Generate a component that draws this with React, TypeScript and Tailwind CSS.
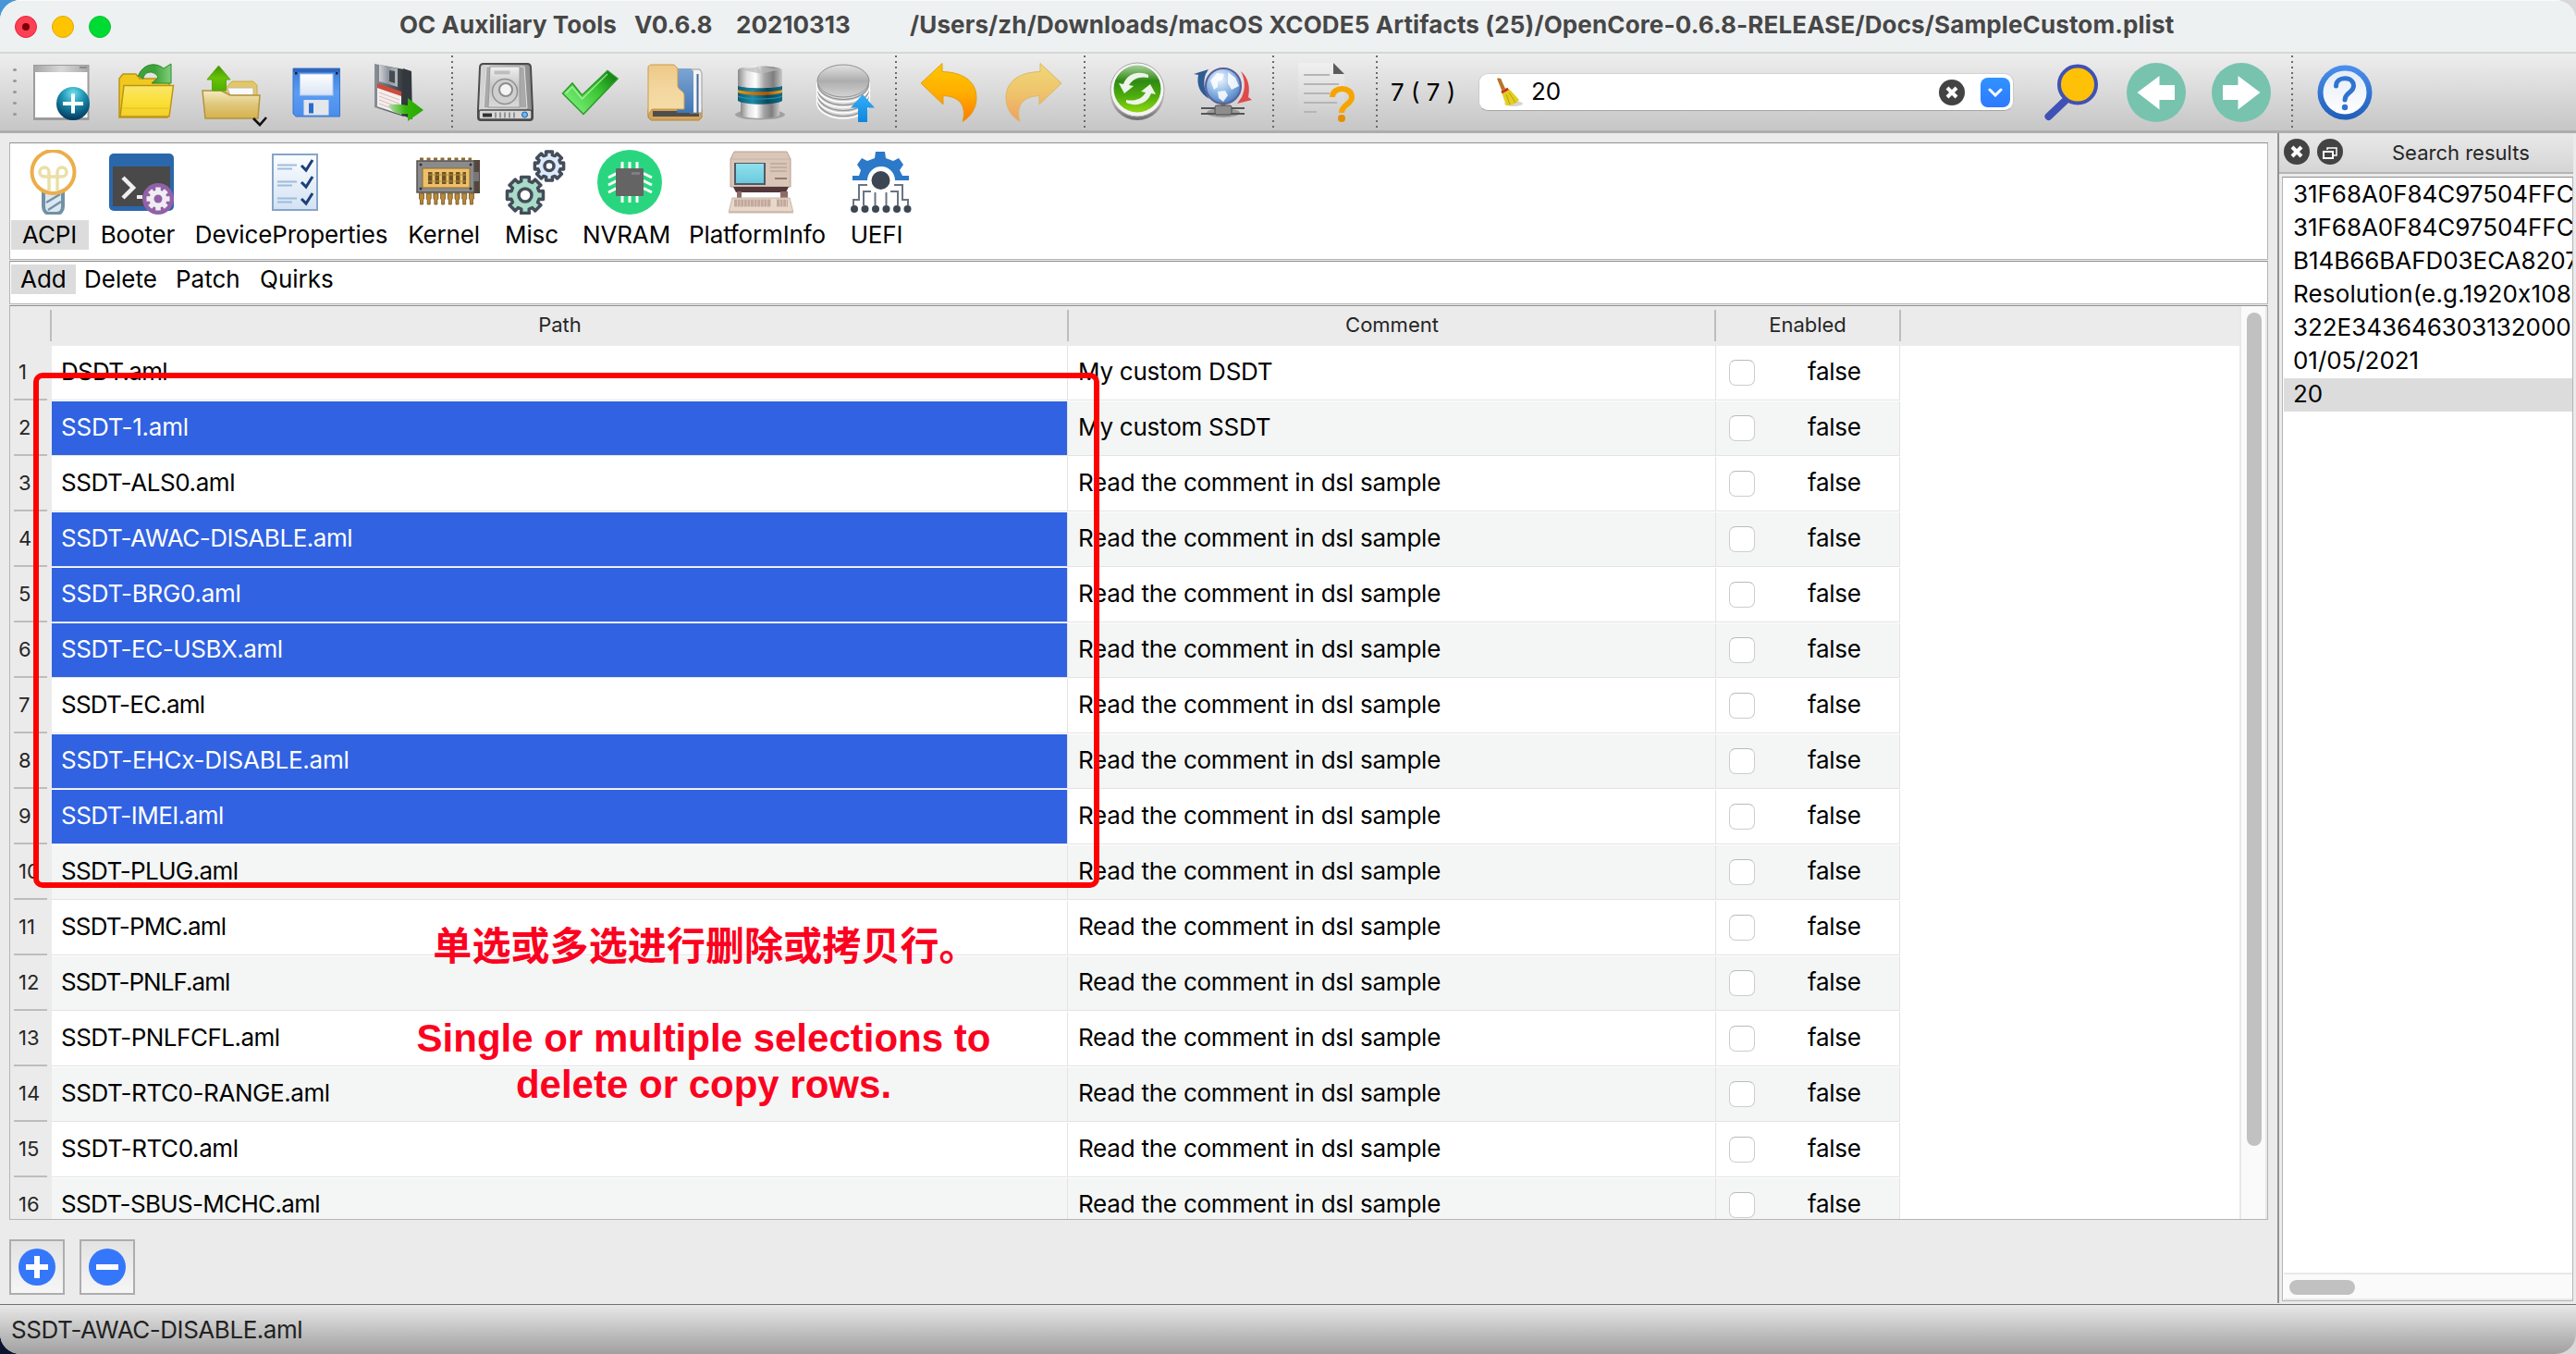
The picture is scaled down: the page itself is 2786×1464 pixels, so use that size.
import React from "react";

const FONT = "font-['Inter','Noto_Sans_CJK_SC',sans-serif]";

function Icon({ children, size = 64 }: { children: React.ReactNode; size?: number }) {
  return (
    <svg viewBox="0 0 64 64" width={size} height={size} className="block shrink-0 overflow-visible">
      {children}
    </svg>
  );
}

function Stops({ id, c, h = false }: { id: string; c: string[]; h?: boolean }) {
  return (
    <linearGradient id={id} x1="0" y1="0" x2={h ? "1" : "0"} y2={h ? "0" : "1"}>
      {c.map((s, i) => (
        <stop key={i} offset={i / (c.length - 1)} stopColor={s} />
      ))}
    </linearGradient>
  );
}

const NewIcon = () => (
  <Icon>
    <defs>
      <Stops id="nw" c={["#a5a5a5", "#d8d8d8", "#a9a9a9"]} h />
      <radialGradient id="nwc" cx=".5" cy=".2" r=".8">
        <stop offset="0" stopColor="#6fe0ee" />
        <stop offset=".45" stopColor="#1b8fae" />
        <stop offset="1" stopColor="#02365c" />
      </radialGradient>
    </defs>
    <rect x="2" y="2" width="60.500" height="60" fill="#9c9c9c" />
    <rect x="3" y="3" width="58.500" height="8" fill="url(#nw)" />
    <rect x="52" y="4" width="8" height="2" fill="#8b8b8b" />
    <rect x="4" y="10" width="56.500" height="49" fill="#fff" />
    <circle cx="45" cy="44" r="18" fill="url(#nwc)" />
    <path d="M45 33.500v21M34 44h22" stroke="#fff" strokeWidth="4" />
  </Icon>
);

const OpenIcon = () => (
  <Icon>
    <defs>
      <Stops id="op" c={["#f8e66a", "#fbe03a", "#f0d02a"]} />
      <Stops id="opa" c={["#3ea13a", "#3ea13a", "#7fd07c"]} h />
    </defs>
    <path d="M3 17 7 12h14l4 5h32v9l-2 33H3z" fill="#f0c91f" stroke="#bd9318" strokeWidth="1.500" />
    <path d="M8 24.500h53.500L57 58H4z" fill="url(#op)" stroke="#bd9318" strokeWidth="1.500" />
    <path d="M6 49h52" stroke="#f2c81c" strokeWidth="1.500" />
    <path d="M23.500 14C28 2 41-2 51 6l8-5v21H38l7-6c-3-8-15-8-16 1z" fill="url(#opa)" stroke="#2b8a2e" />
  </Icon>
);

const FolderUpIcon = () => (
  <Icon>
    <defs>
      <Stops id="fu" c={["#f3ecc0", "#dfc77a", "#d6b14c"]} />
      <Stops id="fua" c={["#3f9400", "#67c208", "#4fae00"]} />
    </defs>
    <path d="M22 31 33 20h23l4 4v12H22z" fill="#e3c766" stroke="#c8aa4e" />
    <path d="M28 27h28v8H31z" fill="#fafafa" stroke="#b9b9b9" />
    <path d="M1 30h20l10 5h32l-2 25H4z" fill="url(#fu)" stroke="#b4923e" strokeWidth="1.500" />
    <path d="M18.500 3 31 18h-4.500v12h-15V18H6z" fill="url(#fua)" stroke="#5da516" />
    <path d="m56 60 7 7 7-8" fill="none" stroke="#111" strokeWidth="2.600" />
  </Icon>
);

const FloppyIcon = () => (
  <Icon>
    <defs>
      <Stops id="fl" c={["#3b7bd8", "#5b9df2", "#4a8ceb"]} />
      <Stops id="fl2" c={["#ffffff", "#d9e4f4"]} />
    </defs>
    <path d="M7 6h50.500v52H10l-3-3z" fill="url(#fl)" stroke="#3b74cf" />
    <rect x="7" y="6" width="50.500" height="4" fill="#2f65bb" />
    <rect x="14.500" y="12" width="35.500" height="23" fill="url(#fl2)" stroke="#a9c6f2" />
    <rect x="9" y="10" width="2.500" height="2.500" fill="#123" />
    <rect x="53" y="10" width="2.500" height="2.500" fill="#123" />
    <rect x="18.500" y="40" width="27" height="16.500" fill="#e3e6ea" />
    <rect x="24" y="43.500" width="5" height="11" fill="#2b6bd0" />
  </Icon>
);

const SaveAsIcon = () => (
  <Icon>
    <defs>
      <Stops id="sa" c={["#8a9097", "#5c636b", "#33373c"]} h />
      <Stops id="sa2" c={["#b5dcae", "#34b60a", "#2aa500"]} h />
      <Stops id="sa3" c={["#d0d3d6", "#8e959c", "#b4b9be"]} h />
    </defs>
    <path d="M34 6l9 3 1 52-10-4z" fill="#33383e" />
    <path d="M3 1 35 7v51L3 48z" fill="url(#sa)" />
    <path d="M8 2l20 4v20L8 20z" fill="url(#sa3)" />
    <path d="M19 8l6 1v13l-6-2z" fill="#454b52" />
    <path d="M6 23l26 9v24L6 47z" fill="#f2efef" />
    <path d="M6 22l26 9v5L6 27z" fill="#cf4a3c" />
    <path d="M8 36l22 8M8 40l22 8M8 32l22 8M8 44l16 6" stroke="#e3b9b4" strokeWidth="1" />
    <path d="M18 46c6-2 12-1 21 0v-8l17 13-17 12v-8c-9 1-16 0-21-9z" fill="url(#sa2)" />
  </Icon>
);

const DriveIcon = () => (
  <Icon>
    <defs>
      <Stops id="dr" c={["#d9d9d9", "#b1b1b1", "#8b8b8b"]} h />
      <Stops id="dr2" c={["#f0f0f0", "#c5c5c5", "#dadada"]} />
    </defs>
    <path d="M9 1h47c3 0 4 2 4 4l2 46v8c0 2-1 3-3 3H6c-2 0-3-1-3-3v-8L5 5c0-2 1-4 4-4z" fill="url(#dr)" stroke="#4c4c4c" strokeWidth="2" />
    <path d="M12 4h41l3 45H9z" fill="#a9a9a9" stroke="#e5e5e5" strokeWidth="1" />
    <path d="M16 4h32v44H14z" fill="url(#dr2)" stroke="#9a9a9a" />
    <rect x="20" y="8" width="18" height="5" rx="1" fill="#bdbdbd" stroke="#e7e7e7" />
    <circle cx="32" cy="31" r="13.500" fill="#cfcfcf" stroke="#909090" strokeWidth="1.500" />
    <circle cx="33" cy="29" r="7" fill="#f4f4f4" stroke="#8c8c8c" strokeWidth="2" />
    <rect x="4" y="51" width="57" height="10" rx="2" fill="#d7d7d7" stroke="#4c4c4c" strokeWidth="1.500" />
    <path d="M8 56.500h10" stroke="#333" strokeWidth="4" />
    <path d="M22 53.500v6M27 53.500v6M32 53.500v6M37 53.500v6M42 53.500v6" stroke="#808080" strokeWidth="1.500" />
    <circle cx="53.500" cy="56" r="3" fill="#6db7f2" stroke="#1d5c9c" />
  </Icon>
);

const CheckIcon = () => (
  <Icon>
    <defs>
      <linearGradient id="ck" x1="0" y1=".7" x2="1" y2="0">
        <stop offset="0" stopColor="#7df07a" />
        <stop offset=".55" stopColor="#39c431" />
        <stop offset="1" stopColor="#0c6e0c" />
      </linearGradient>
    </defs>
    <path d="M2.500 33 13 22l10.500 13L51 8.500 62 17 25 55.500z" fill="url(#ck)" stroke="#2a9a2a" strokeWidth="1.500" />
    <path d="M6 33l7-7 10.500 13L51 12" fill="none" stroke="#b8f5b4" strokeWidth="1.200" opacity=".8" />
  </Icon>
);

const BookIcon = () => (
  <Icon>
    <defs>
      <Stops id="bk" c={["#eec888", "#f3d79f", "#f5dca8"]} />
      <Stops id="bk2" c={["#7ea5d2", "#3f76b8"]} />
    </defs>
    <path d="M3 50h58v9l-3 3H6l-3-3z" fill="#d3a45a" stroke="#b3853c" />
    <path d="M8 52h50v6H8z" fill="#4d4d4d" />
    <path d="M48 7h11l2 4v43H48z" fill="#f3f3f3" stroke="#999" />
    <path d="M56.500 12v42" stroke="#44689b" strokeWidth="2" />
    <path d="M34 6h15l3 3v45H34z" fill="url(#bk2)" />
    <path d="M3 5c0-2 2-3 4-3h24l4 4v19c0 4 7 5 7 10v15H7l-4 6z" fill="url(#bk)" stroke="#c99b4f" />
  </Icon>
);

const DbIcon = () => (
  <Icon>
    <defs>
      <Stops id="db" c={["#8b8b8b", "#e0e0e0", "#ffffff", "#a5a5a5", "#7e7e7e", "#c9c9c9"]} h />
      <Stops id="db2" c={["#0c5d75", "#1e8aa6", "#07495c", "#0f6d86"]} h />
      <Stops id="db3" c={["#e09a1c", "#c4760f", "#a8550a", "#eda52e"]} h />
    </defs>
    <ellipse cx="32" cy="56" rx="27" ry="5.500" fill="#8d8d8d" opacity=".7" />
    <path d="M8 8c0-6 48-6 48 0v20H8z" fill="url(#db)" />
    <path d="M10 7 30 4l4 8zM54 7 34 4l-2 8z" fill="#b9b9b9" opacity=".7" />
    <path d="M11 41v15c0 5 42 5 42 0V41z" fill="url(#db)" />
    <path d="M8 25c8 3 40 3 48 0v16c-8 5-40 5-48 0z" fill="url(#db2)" />
    <path d="M8 29c8 3 40 3 48 0v3c-8 4-40 4-48 0z" fill="url(#db3)" />
    <path d="M8 36c8 4 40 4 48 0" fill="none" stroke="#2d93ad" strokeWidth="1.200" />
  </Icon>
);

const StackIcon = () => (
  <Icon>
    <defs>
      <Stops id="st" c={["#e2e2e2", "#adadad", "#d3d3d3"]} />
      <Stops id="st2" c={["#35aef8", "#0d86e0"]} />
    </defs>
    {[23, 17, 11, 5].map((d) => (
      <g key={d}>
        <ellipse cx="30" cy={19.5 + d} rx="28.500" ry="17.500" fill="#cfcfcf" stroke="#fff" strokeWidth="1.500" />
        <ellipse cx="30" cy={17.5 + d} rx="27.500" ry="17" fill="#d9d9d9" stroke="#8e8e8e" strokeWidth="1.200" />
      </g>
    ))}
    <ellipse cx="30" cy="19.500" rx="28" ry="17.500" fill="url(#st)" stroke="#8f8f8f" />
    <path d="M51 34 64 48.500h-8V64H46V48.500h-8z" fill="url(#st2)" />
  </Icon>
);

const UNDO = "M2 22 25 .5v9C45 10 62 18 62 38c0 11-6 20-15 25.500 4-14 0-27-21-28V45z";

const UndoIcon = () => (
  <Icon>
    <defs>
      <Stops id="un" c={["#ffc800", "#ffae00", "#ff7a00"]} />
    </defs>
    <path d={UNDO} fill="url(#un)" stroke="#dba11a" />
  </Icon>
);

const RedoIcon = () => (
  <Icon>
    <defs>
      <Stops id="re" c={["#f0d878", "#efc46c", "#eea062"]} />
    </defs>
    <path transform="translate(64 0) scale(-1 1)" d={UNDO} fill="url(#re)" stroke="#dcb964" />
  </Icon>
);

const RefreshIcon = () => (
  <Icon>
    <defs>
      <Stops id="rf" c={["#a6cf9b", "#2f8a12", "#4fae0d", "#8fd812"]} />
      <Stops id="rf2" c={["#ffffff", "#d8d8d8", "#6b6b6b"]} />
    </defs>
    <ellipse cx="32" cy="32" rx="29.500" ry="30" fill="url(#rf2)" />
    <circle cx="32" cy="29" r="29" fill="#f4f4f4" stroke="#a8a8a8" />
    <circle cx="32" cy="28" r="25.500" fill="url(#rf)" />
    <path d="M44 13c-11-5-23-1-27 10l-5-1 6 11 10-8-5-1c4-7 12-10 21-8z" fill="#eef4ea" />
    <path d="M20 43c11 5 23 1 27-10l5 1-6-11-10 8 5 1c-4 7-12 10-21 8z" fill="#eef4ea" />
  </Icon>
);

const NetworkIcon = () => (
  <Icon>
    <defs>
      <radialGradient id="nt" cx=".4" cy=".3" r=".8">
        <stop offset="0" stopColor="#f2f8ff" />
        <stop offset=".5" stopColor="#8fb8e6" />
        <stop offset="1" stopColor="#3a6db5" />
      </radialGradient>
    </defs>
    <ellipse cx="33" cy="54" rx="18" ry="5" fill="#777" opacity=".6" />
    <path d="M1 12 17 7l-3 5c-3 8-2 18 4 27C7 33 4 23 6 13z" fill="#2f5c92" />
    <path d="M52 9c9 8 10 18 8 28l4 3-16 4 5-7c4-9 4-18-1-28z" fill="#e04a4a" />
    <circle cx="33" cy="25" r="19" fill="url(#nt)" stroke="#5a5f9a" strokeWidth="2" />
    <path d="M19 19l7-8 8 1-2 6-5 2v6l-4 3zM38 10l8 6 4 9-8 4-4-7zM27 31l8-1 3 5-5 7-5-4z" fill="#fff" opacity=".85" />
    <path d="M9 49h47M9 55h47" stroke="#555" strokeWidth="2" />
    <rect x="24" y="46" width="18" height="10" rx="2" fill="#8d8d8d" stroke="#4e4e4e" />
    <path d="M33 43v4" stroke="#666" strokeWidth="5" />
  </Icon>
);

const DocHelpIcon = () => (
  <Icon>
    <defs>
      <Stops id="dh" c={["#f0f0f0", "#dedede", "#c9c9c9"]} />
    </defs>
    <path d="M2 0h38l12 12v52H2z" fill="url(#dh)" />
    <path d="M40 0v12h12z" fill="#5b5b5b" />
    <path d="M8 13h28M8 23h38M8 33h28M8 43h36M8 53h14" stroke="#b5b5b5" strokeWidth="2" />
    <path d="M39 37c0-12 21-12 21 0 0 8-11 8-11 17" fill="none" stroke="#f6a500" strokeWidth="6" />
    <circle cx="49" cy="60" r="4" fill="#e38f00" />
  </Icon>
);

const SearchIcon = () => (
  <Icon>
    <path d="M27.500 39 7.500 58" stroke="#3f51b5" strokeWidth="8" strokeLinecap="round" />
    <circle cx="39" cy="23.500" r="20" fill="#ffc107" stroke="#3f51b5" strokeWidth="4" />
  </Icon>
);

const CircleArrow = ({ flip = false }: { flip?: boolean }) => (
  <Icon>
    <circle cx="32" cy="32" r="32" fill="#77c3ae" />
    <path transform={flip ? "translate(64 0) scale(-1 1)" : undefined} d="M11.500 32 35.500 14v10H52v16H35.500v10.500z" fill="#fff" />
  </Icon>
);

const HelpIcon = () => (
  <Icon>
    <defs>
      <Stops id="hp" c={["#4a90ee", "#1f5db8"]} />
      <Stops id="hp2" c={["#e4ebf8", "#ffffff"]} />
    </defs>
    <circle cx="32" cy="32" r="29.500" fill="url(#hp)" />
    <circle cx="32" cy="32" r="23.500" fill="url(#hp2)" />
    <path d="M22.500 25c0-11 19-11 19 0 0 7-9.500 7-9.500 15" fill="none" stroke="#2f74d0" strokeWidth="5" strokeLinecap="round" />
    <circle cx="32" cy="48" r="3.200" fill="#2f74d0" />
  </Icon>
);

function Separator() {
  return (
    <div className="flex h-[80px] w-12 shrink-0 flex-col justify-between self-start pt-[2px] pl-[22px]">
      {Array.from({ length: 14 }, (_, i) => (
        <span key={i} className="block h-[2px] w-[2px] bg-[#6a6a6a]" />
      ))}
    </div>
  );
}

const BulbIcon = () => (
  <svg viewBox="0 0 70 70" width="70" height="70" className="block">
    <path d="M24 44h21v17c0 5-3 8-7 8h-7c-4 0-7-3-7-8z" fill="#dbe7ef" stroke="#7391a6" strokeWidth="4" />
    <path d="M27 57l15-9M29 65l14-9" stroke="#7391a6" strokeWidth="2.500" />
    <circle cx="34.500" cy="24" r="23" fill="#fff" stroke="#ecae4b" strokeWidth="4" />
    <path d="M30 44V24a5 5 0 1 0-5 5h19a5 5 0 1 0-5-5v20" fill="none" stroke="#eadfa6" strokeWidth="3.500" />
  </svg>
);

const BooterIcon = () => (
  <svg viewBox="0 0 70 70" width="70" height="70" className="block">
    <rect x="0" y="4" width="70" height="62" rx="5" fill="#2a67ab" />
    <rect x="4" y="18" width="62" height="43" fill="#494949" />
    <path d="m15 30 11 11-11 11" fill="none" stroke="#efefef" strokeWidth="4.500" />
    <path d="M30 51h6" stroke="#efefef" strokeWidth="4" />
    <circle cx="53" cy="53" r="17" fill="#9161a8" />
    {[0, 45, 90, 135].map((a) => (
      <path key={a} d="M53 40.500v25" stroke="#f0edf2" strokeWidth="5.500" transform={`rotate(${a} 53 53)`} />
    ))}
    <circle cx="53" cy="53" r="9.500" fill="#f0edf2" />
    <circle cx="53" cy="53" r="4.500" fill="#9161a8" />
  </svg>
);

const DeviceIcon = () => (
  <svg viewBox="0 0 70 70" width="70" height="70" className="block">
    <defs>
      <Stops id="dv" c={["#fbfdff", "#d3e2f3"]} />
    </defs>
    <rect x="11" y="5" width="48" height="60" fill="url(#dv)" stroke="#86a5c8" strokeWidth="2" />
    {[0, 18, 36].map((d) => (
      <g key={d} transform={`translate(0 ${d})`}>
        <path d="M16 16.500h21M16 20.500h16" stroke="#9dbcdb" strokeWidth="2" />
        <path d="m42 17 5 5 7-11" fill="none" stroke="#1c3f78" strokeWidth="3" />
      </g>
    ))}
  </svg>
);

const KernelIcon = () => (
  <svg viewBox="-1 0 70 70" width="70" height="70" className="block">
    <path d="M62 11h7v36h-7z" fill="#54463c" />
    <path d="M4 10h56" stroke="#8a6a2e" strokeWidth="3" strokeDasharray="4 3.500" />
    <rect x="1" y="12" width="62" height="34" fill="#8b8b8d" stroke="#55504c" strokeWidth="1.500" />
    <rect x="7" y="20" width="51" height="21" fill="#edc069" stroke="#8d6a2c" />
    <path d="M13 30.500h41" stroke="#4e3a16" strokeWidth="13" strokeDasharray="4.500 3" opacity=".8" />
    <path d="M13 27h41M13 34h41" stroke="#b58b3e" strokeWidth="1" />
    <path d="M62 24h6v10h-6z" fill="#777" />
    {[0, 1, 2, 3, 4, 5, 6, 7].map((i) => (
      <path key={i} d={`M${3.5 + i * 7.7} 47h5v6l-1 1v5h-3v-5l-1-1z`} fill="#b98736" stroke="#6b5020" strokeWidth=".8" />
    ))}
    <circle cx="5" cy="16" r="1.500" fill="#333" />
    <circle cx="59" cy="16" r="1.500" fill="#333" />
    <circle cx="5" cy="42" r="1.500" fill="#333" />
    <circle cx="59" cy="42" r="1.500" fill="#333" />
  </svg>
);

function Gear({ cx, cy, r, fill, hole }: { cx: number; cy: number; r: number; fill: string; hole: number }) {
  const pts: string[] = [];
  for (let i = 0; i < 8; i++) {
    const a = (i * Math.PI) / 4;
    for (const [d, k] of [
      [-0.27, 0.78],
      [-0.22, 1],
      [0.22, 1],
      [0.27, 0.78],
    ]) {
      pts.push(`${(cx + r * k * Math.sin(a + d)).toFixed(1)},${(cy - r * k * Math.cos(a + d)).toFixed(1)}`);
    }
  }
  return (
    <g stroke="#444d59" strokeWidth="3.500" strokeLinejoin="round">
      <polygon points={pts.join(" ")} fill={fill} />
      <circle cx={cx} cy={cy} r={hole} fill="#fff" />
    </g>
  );
}

const MiscIcon = () => (
  <svg viewBox="1 0 70 70" width="70" height="70" className="block">
    <Gear cx={51} cy={17.5} r={16} fill="#ddeafa" hole={5} />
    <Gear cx={25} cy={49} r={20} fill="#a8dcc9" hole={7} />
  </svg>
);

const NvramIcon = () => (
  <svg viewBox="1 0 70 70" width="70" height="70" className="block overflow-visible">
    <circle cx="35" cy="35" r="35" fill="#29d67f" />
    <path
      d="M27 13v44M35 13v44M43 13v44M12 30l8-4h31l8 4M12 38l8-4h31l8 4M12 46l8-4h31l8 4"
      fill="none"
      stroke="#fff"
      strokeWidth="3"
    />
    <rect x="20" y="20" width="30" height="30" rx="1" fill="#646464" />
    <path d="M37 25.500h9" stroke="#808080" strokeWidth="3" />
  </svg>
);

const PlatformIcon = () => (
  <svg viewBox="0 0 70 70" width="70" height="70" className="block">
    <defs>
      <Stops id="pf" c={["#8fe0ec", "#6ccadd"]} />
    </defs>
    <path d="M6 2h57l4 8v30H2V10z" fill="#d9c6b8" stroke="#b8a192" />
    <path d="M3 10h63" stroke="#c9b4a5" />
    <path d="M5 40h60l-3 6H8z" fill="#53373a" />
    <rect x="9" y="45" width="5" height="9" fill="#8c6c66" />
    <rect x="56" y="45" width="8" height="9" fill="#8c6c66" />
    <rect x="6" y="14" width="34" height="24" fill="#4f5a66" />
    <rect x="8" y="15" width="30" height="21" fill="url(#pf)" />
    <path d="M45 15h18M45 19h18M45 23h18" stroke="#c0a797" strokeWidth="1.300" />
    <path d="M50 31h13" stroke="#7a6157" strokeWidth="1.500" />
    <path d="M4 52h62l4 16H0z" fill="#e8d8cb" stroke="#c9b4a5" />
    <path d="M6 57.500h40M52 57.500h12" stroke="#c2a99c" strokeWidth="8" strokeDasharray="3 .6" />
    <path d="M1 67h68" stroke="#cbb5a7" strokeWidth="1.500" />
  </svg>
);

const UefiIcon = () => (
  <svg viewBox="-1 0 70 70" width="70" height="70" className="block">
    <path
      d="M4 33v-5h7l2-6-4-6 5-7 6 3 8-3 1-7h10l1 7 8 3 6-3 5 7-4 6 3 6h7v5H50a15 15 0 0 0-30 0z"
      fill="#2b79c8"
    />
    <circle cx="34.500" cy="33" r="10" fill="#3c4654" />
    <path
      d="M20 38h-9v16H5v6M24 45h-8v15M28.500 46v14M40.500 46v14M45 45h8v15M49 38h9v16h6v6"
      fill="none"
      stroke="#6a7482"
      strokeWidth="2"
    />
    {[6, 17.5, 29, 40.5, 52, 63.5].map((x) => (
      <circle key={x} cx={x} cy="64" r="4" fill="#3c4654" />
    ))}
  </svg>
);

const SECTIONS = [
  { t: "ACPI", w: "w-[84px]", i: <BulbIcon />, on: true },
  { t: "Booter", w: "w-[106px]", i: <BooterIcon /> },
  { t: "DeviceProperties", w: "w-[226px]", i: <DeviceIcon /> },
  { t: "Kernel", w: "w-[104px]", i: <KernelIcon /> },
  { t: "Misc", w: "w-[86px]", i: <MiscIcon /> },
  { t: "NVRAM", w: "w-[119px]", i: <NvramIcon /> },
  { t: "PlatformInfo", w: "w-[164px]", i: <PlatformIcon /> },
  { t: "UEFI", w: "w-[94px]", i: <UefiIcon /> },
];

const ROWS: [string, boolean, string][] = [
  ["DSDT.aml", false, "tracking-[-0.7px]"],
  ["SSDT-1.aml", true, "tracking-[-0.2px]"],
  ["SSDT-ALS0.aml", false, "tracking-[-0.42px]"],
  ["SSDT-AWAC-DISABLE.aml", true, "tracking-[-0.46px]"],
  ["SSDT-BRG0.aml", true, "tracking-[-0.28px]"],
  ["SSDT-EC-USBX.aml", true, "tracking-[-0.44px]"],
  ["SSDT-EC.aml", false, "tracking-[-0.78px]"],
  ["SSDT-EHCx-DISABLE.aml", true, "tracking-[-0.24px]"],
  ["SSDT-IMEI.aml", true, "tracking-[-0.5px]"],
  ["SSDT-PLUG.aml", false, "tracking-[-0.62px]"],
  ["SSDT-PMC.aml", false, "tracking-[-0.85px]"],
  ["SSDT-PNLF.aml", false, "tracking-[-0.95px]"],
  ["SSDT-PNLFCFL.aml", false, "tracking-[-0.5px]"],
  ["SSDT-RTC0-RANGE.aml", false, "tracking-[-0.42px]"],
  ["SSDT-RTC0.aml", false, "tracking-[-0.4px]"],
  ["SSDT-SBUS-MCHC.aml", false, "tracking-[-0.66px]"],
];

const COMMENTS = ["My custom DSDT", "My custom SSDT"];

const RESULTS = [
  "31F68A0F84C97504FFC",
  "31F68A0F84C97504FFC",
  "B14B66BAFD03ECA8207",
  "Resolution(e.g.1920x108",
  "322E343646303132000",
  "01/05/2021",
  "20",
];

export default function App() {
  return (
    <div
      className={`relative h-[1464px] w-[2786px] overflow-hidden bg-[linear-gradient(90deg,#4a94d8_0,#4a94d8_50%,#d8d8d8_50%)] text-[26px] text-black ${FONT}`}
    >
      <div className="absolute bottom-0 left-0 h-10 w-10 bg-[#0a1430]" />
      <div className="relative flex h-full w-full flex-col overflow-hidden rounded-[22px] bg-[#ebebeb]">
        <header className="flex h-[56px] shrink-0 items-center border-t border-[#fbfbfb] bg-[#eef1f2] pl-4 font-bold whitespace-pre text-[#474747]">
          <span className="flex h-6 w-6 items-center justify-center rounded-full border border-[#e0243c] bg-[#ff4054]">
            <span className="h-2 w-2 rounded-full bg-[#7c0008]" />
          </span>
          <span className="ml-4 h-6 w-6 rounded-full border border-[#e0a800] bg-[#ffc400]" />
          <span className="ml-4 h-6 w-6 rounded-full border border-[#00c22c] bg-[#00db33]" />
          <span className="ml-[312px] w-[254px] pb-1 tracking-[0.05px]">OC Auxiliary Tools</span>
          <span className="w-[110px] pb-1">V0.6.8</span>
          <span className="w-[188px] pb-1">20210313</span>
          <span className="pb-1 tracking-[0.13px]">
            /Users/zh/Downloads/macOS XCODE5 Artifacts (25)/OpenCore-0.6.8-RELEASE/Docs/SampleCustom.plist
          </span>
        </header>

        <div className="flex h-[88px] shrink-0 items-center border-t-2 border-b-[3px] border-t-[#d6d6d6] border-b-[#adadad] bg-linear-to-b from-[#eeeeee] to-[#c6c6c6]">
          <div className="flex w-[34px] shrink-0 flex-col gap-[9px] pl-[14px]">
            {[0, 1, 2, 3, 4].map((i) => (
              <span key={i} className="h-[3px] w-[4px] rounded-full bg-[#9a9a9a]" />
            ))}
          </div>
          <div className="flex gap-7">
            <NewIcon />
            <OpenIcon />
            <FolderUpIcon />
            <FloppyIcon />
            <SaveAsIcon />
          </div>
          <Separator />
          <div className="flex gap-7">
            <DriveIcon />
            <CheckIcon />
            <BookIcon />
            <DbIcon />
            <StackIcon />
          </div>
          <Separator />
          <div className="flex gap-7">
            <UndoIcon />
            <RedoIcon />
          </div>
          <Separator />
          <div className="flex gap-7">
            <RefreshIcon />
            <NetworkIcon />
          </div>
          <Separator />
          <DocHelpIcon />
          <div className="-mr-[10px] self-start">
            <Separator />
          </div>
          <span className="w-[95px] shrink-0 whitespace-pre">7 ( 7 )</span>
          <div className="flex h-[41px] w-[579px] shrink-0 items-center rounded-[10px] border border-t-[#d2d2d2] border-r-[#cacaca] border-b-[#a6a6a6] border-l-[#cacaca] bg-white pr-[3px] pl-[17px]">
            <svg viewBox="0 0 30 32" width="30" height="32">
              <path d="M2 1c3-1 5 0 5 2l5 11-4 2z" fill="#b8752a" />
              <ellipse cx="20" cy="28" rx="10" ry="3" fill="#d5d5d5" />
              <path d="m7 14 6-3 4 3 9 10c-3 4-8 6-14 6L8 19z" fill="#e3cf1f" />
              <path d="m7 16 7-4" stroke="#c4332a" strokeWidth="3" />
              <path d="m12 18 4 11M15 16l7 11" stroke="#b5a212" />
            </svg>
            <span className="ml-[9px] flex-1 pb-[2px]">20</span>
            <svg viewBox="0 0 28 28" width="28" height="28">
              <circle cx="14" cy="14" r="14" fill="#434343" />
              <path d="m9 9 10 10M19 9 9 19" stroke="#fff" strokeWidth="4" />
            </svg>
            <span className="ml-[17px] flex h-8 w-8 items-center justify-center rounded-[8px] bg-linear-to-b from-[#2f93ff] to-[#2f78ff]">
              <svg viewBox="0 0 16 10" width="16" height="10">
                <path d="m2 2 6 6 6-6" fill="none" stroke="#fff" strokeWidth="3" strokeLinecap="round" />
              </svg>
            </span>
          </div>
          <div className="ml-[30px] flex gap-7">
            <SearchIcon />
            <CircleArrow />
            <CircleArrow flip />
          </div>
          <Separator />
          <HelpIcon />
        </div>

        <div className="flex min-h-0 flex-1">
          <main className="flex w-[2463px] shrink-0 flex-col pt-[10px] pl-[10px]">
            <div className="flex h-[127px] w-[2443px] shrink-0 border border-[#b5b5b5] border-t-[#8f8f8f] bg-white pt-[7px] pl-px">
              {SECTIONS.map((s) => (
                <div key={s.t} className={`flex shrink-0 flex-col items-center ${s.w}`}>
                  <div className="h-[76px] pl-2">{s.i}</div>
                  <div
                    className={`flex h-8 w-full items-center justify-center pb-[2px] tracking-[-0.15px] ${s.on ? "bg-[#dcdcdc] pr-px" : ""}`}
                  >
                    {s.t}
                  </div>
                </div>
              ))}
            </div>
            <div className="mt-px flex h-[47px] w-[2443px] shrink-0 border border-[#b5b5b5] border-t-[#8f8f8f] bg-white pt-[3px] pl-px">
              <span className="flex h-8 w-[70px] items-center bg-[#dcdcdc] pb-[2px] pl-[10px]">Add</span>
              <span className="flex h-8 w-[98px] items-center pb-[2px] pl-[9px]">Delete</span>
              <span className="flex h-8 w-[89px] items-center pb-[2px] pl-[10px]">Patch</span>
              <span className="flex h-8 items-center pb-[2px] pl-[12px]">Quirks</span>
            </div>

            <div className="relative mt-px flex h-[989px] w-[2443px] shrink-0 overflow-hidden border border-[#b5b5b5] border-t-[#8f8f8f] bg-white">
              <div className="flex w-[2411px] shrink-0 flex-col">
                <div className="flex h-[43px] shrink-0 bg-[#ebebeb] pt-1 text-[22px] text-[#262626]">
                  <span className="h-[34px] w-[45px] border-r-2 border-[#bdbdbd]" />
                  <span className="flex h-[34px] w-[1100px] items-center justify-center border-r-2 border-[#bdbdbd] pb-[2px] pl-px">Path</span>
                  <span className="flex h-[34px] w-[700px] items-center justify-center border-r-2 border-[#bdbdbd] pb-[2px] pl-px">Comment</span>
                  <span className="flex h-[34px] w-[200px] items-center justify-center border-r-2 border-[#bdbdbd] pb-[2px]">Enabled</span>
                </div>
                {ROWS.map(([path, sel, tracking], i) => (
                  <div key={path} className="flex h-[60px] shrink-0">
                    <div className="w-[45px] shrink-0 bg-[#ebebeb] pl-1">
                      <div className="flex h-[59px] w-9 items-center border-b-2 border-[#bdbdbd] pl-[5px] text-[22px] text-[#262626]">
                        {i + 1}
                      </div>
                    </div>
                    <div
                      className={`flex h-[59px] w-[1098px] shrink-0 items-center border-b border-[#e3e3e3] pb-[3px] pl-[10px] ${tracking} ${
                        sel ? "bg-[#3062e2] text-white" : i % 2 ? "bg-[#f4f6f5]" : "bg-white"
                      }`}
                    >
                      {path}
                    </div>
                    <div className={`flex h-[59px] w-[701px] shrink-0 items-center border-b border-l border-[#e3e3e3] pb-[3px] pl-[11px] tracking-[-0.23px] ${i % 2 ? "bg-[#f4f6f5]" : "bg-white"}`}>
                      {COMMENTS[i] ?? "Read the comment in dsl sample"}
                    </div>
                    <div className={`flex h-[59px] w-[200px] shrink-0 items-center border-x border-b border-[#e3e3e3] pb-[3px] pl-[14px] ${i % 2 ? "bg-[#f4f6f5]" : "bg-white"}`}>
                      <span className="mt-[2px] h-7 w-7 rounded-[7px] border border-[#cdcdcd] border-t-[#bababa] bg-white" />
                      <span className="ml-[57px] tracking-[-0.3px]">false</span>
                    </div>
                  </div>
                ))}
              </div>
              <div className="w-[30px] border-r-2 border-l-2 border-[#e8e8e8] bg-[#fafafa] pt-[7px] pl-[6px]">
                <div className="h-[901px] w-4 rounded-full bg-[#c1c1c1]" />
              </div>
            </div>

            <div className="mt-[21px] flex gap-4">
              {["M20 8v24M8 20h24", "M8 20h24"].map((d) => (
                <button
                  key={d}
                  className="flex h-[60px] w-[60px] items-center justify-center border-2 border-[#adadad] bg-linear-to-b from-[#e3e3e3] to-[#f6f6f6]"
                >
                  <svg viewBox="0 0 40 40" width="40" height="40">
                    <circle cx="20" cy="20" r="20" fill="#3577fb" />
                    <path d={d} stroke="#fff" strokeWidth="6" />
                  </svg>
                </button>
              ))}
            </div>
          </main>

          <aside className="mb-px flex min-w-0 flex-1 flex-col border-l-2 border-[#919191] pr-[3px]">
            <div className="flex h-[44px] shrink-0 items-center border-b-2 border-[#b5b5b5] bg-linear-to-b from-[#e9e9e9] to-[#d5d5d5] pl-[5px] text-[22px] text-[#262626]">
              <svg viewBox="0 0 28 28" width="28" height="28" className="overflow-visible">
                <circle cx="14" cy="13" r="14" fill="#434343" />
                <path d="m9 8 10 10M19 8 9 18" stroke="#fff" strokeWidth="4" />
              </svg>
              <svg viewBox="0 0 28 28" width="28" height="28" className="ml-2 overflow-visible">
                <circle cx="14" cy="13" r="14" fill="#434343" />
                <path d="M11 11V9h10v8h-3" fill="none" stroke="#fff" strokeWidth="1.500" />
                <rect x="7" y="13" width="10" height="7" fill="none" stroke="#fff" strokeWidth="2" />
              </svg>
              <span className="ml-[53px]">Search results</span>
            </div>
            <div className="mt-[3px] mb-[2px] ml-[3px] flex min-h-0 flex-1 flex-col border border-[#b5b5b5] border-t-[#8f8f8f] bg-white pt-px pl-px">
              {RESULTS.map((r, i) => (
                <div
                  key={i}
                  className={`h-9 shrink-0 overflow-hidden pl-[10px] leading-[34px] whitespace-nowrap [font-feature-settings:'calt'_0] ${
                    i === 6 ? "bg-[#dcdcdc]" : ""
                  } ${i === 3 ? "tracking-[0.15px]" : "tracking-[-0.05px]"}`}
                >
                  {r}
                </div>
              ))}
              <div className="mt-auto h-[30px] border-t-2 border-b-2 border-[#e8e8e8] bg-[#fafafa] pt-[6px] pl-[6px]">
                <div className="h-4 w-[71px] rounded-full bg-[#c1c1c1]" />
              </div>
            </div>
          </aside>
        </div>

        <footer className="flex h-[54px] shrink-0 items-center border-t border-[#707070] bg-linear-to-b from-[#e8e8e8] to-[#a0a0a0] pl-[12px] tracking-[-0.46px] text-[#222]">
          SSDT-AWAC-DISABLE.aml
        </footer>
      </div>

      <div className="absolute top-[403px] left-[36px] h-[557px] w-[1153px] rounded-[10px] border-[6px] border-[#fe0000]" />
      <div className="absolute top-[992px] left-[440px] w-[642px] text-center text-[42px] leading-[50px] text-[#fc0020]">
        <p className="h-[106px] pt-[3px] pl-[4px] font-['Noto_Sans_CJK_SC',sans-serif] font-bold tracking-[0.1px] whitespace-nowrap">
          单选或多选进行删除或拷贝行。
        </p>
        <p className="font-['Liberation_Sans',sans-serif] font-bold whitespace-nowrap">
          Single or multiple selections to
          <br />
          delete or copy rows.
        </p>
      </div>
    </div>
  );
}
